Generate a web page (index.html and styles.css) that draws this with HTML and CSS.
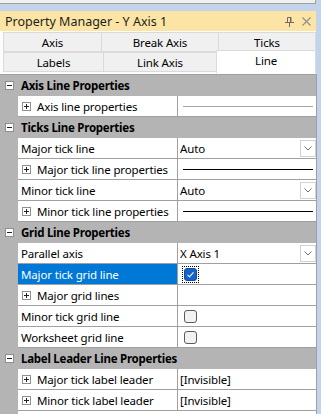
FILE: index.html
```html
<!DOCTYPE html>
<html>
<head>
<meta charset="utf-8">
<link rel="stylesheet" href="styles.css">
</head>
<body>
<div class="app">
  <div class="topstrip"></div>
  <div class="gap"></div>
  <div class="title">
    <span class="title-text">Property Manager - Y Axis 1</span>
    <span class="title-icons">
      <svg class="pin" width="9" height="10" viewBox="0 0 9 10"><path d="M2.5 0.5h3.5v5h-3.5z" fill="none" stroke="#6b6b6b"/><path d="M5.5 0.5v5" stroke="#6b6b6b"/><path d="M0 5.5h9M4.5 6v4" stroke="#6b6b6b"/></svg>
      <svg class="close" width="9" height="9" viewBox="0 0 9 9"><path d="M0.5 0.5l8 8M8.5 0.5l-8 8" stroke="#8c8c8c" stroke-width="1.1"/></svg>
    </span>
  </div>
  <div class="tabs">
    <div class="tabrow">
      <div class="tab t1">Axis</div>
      <div class="tab t2">Break Axis</div>
      <div class="tab t3">Ticks</div>
    </div>
    <div class="tabrow">
      <div class="tab t4">Labels</div>
      <div class="tab t5">Link Axis</div>
      <div class="tab t6 active">Line</div>
    </div>
  </div>
  <div class="grid">
    <div class="row hdr"><span class="gut"><svg class="box" width="9" height="9" viewBox="0 0 9 9"><rect x=".5" y=".5" width="8" height="8" fill="#fff" stroke="#8f8f8f"/><path d="M2 4.5h5" stroke="#222"/></svg></span><span class="hlabel">Axis Line Properties</span></div>
    <div class="row"><span class="gut"></span><span class="label sub"><svg class="box" width="9" height="9" viewBox="0 0 9 9"><rect x=".5" y=".5" width="8" height="8" fill="#fff" stroke="#8f8f8f"/><path d="M2 4.5h5M4.5 2v5" stroke="#222"/></svg>Axis line properties</span><span class="val"><i class="sample grey"></i></span></div>

    <div class="row hdr"><span class="gut"><svg class="box" width="9" height="9" viewBox="0 0 9 9"><rect x=".5" y=".5" width="8" height="8" fill="#fff" stroke="#8f8f8f"/><path d="M2 4.5h5" stroke="#222"/></svg></span><span class="hlabel">Ticks Line Properties</span></div>
    <div class="row"><span class="gut"></span><span class="label">Major tick line</span><span class="val">Auto<span class="drop"><svg width="8" height="5" viewBox="0 0 8 5"><path d="M0.5 0.5l3.5 3.5 3.5-3.5" fill="none" stroke="#707070"/></svg></span></span></div>
    <div class="row"><span class="gut"></span><span class="label sub"><svg class="box" width="9" height="9" viewBox="0 0 9 9"><rect x=".5" y=".5" width="8" height="8" fill="#fff" stroke="#8f8f8f"/><path d="M2 4.5h5M4.5 2v5" stroke="#222"/></svg>Major tick line properties</span><span class="val"><i class="sample black"></i></span></div>
    <div class="row"><span class="gut"></span><span class="label">Minor tick line</span><span class="val">Auto<span class="drop"><svg width="8" height="5" viewBox="0 0 8 5"><path d="M0.5 0.5l3.5 3.5 3.5-3.5" fill="none" stroke="#707070"/></svg></span></span></div>
    <div class="row"><span class="gut"></span><span class="label sub"><svg class="box" width="9" height="9" viewBox="0 0 9 9"><rect x=".5" y=".5" width="8" height="8" fill="#fff" stroke="#8f8f8f"/><path d="M2 4.5h5M4.5 2v5" stroke="#222"/></svg>Minor tick line properties</span><span class="val"><i class="sample black"></i></span></div>

    <div class="row hdr"><span class="gut"><svg class="box" width="9" height="9" viewBox="0 0 9 9"><rect x=".5" y=".5" width="8" height="8" fill="#fff" stroke="#8f8f8f"/><path d="M2 4.5h5" stroke="#222"/></svg></span><span class="hlabel">Grid Line Properties</span></div>
    <div class="row"><span class="gut"></span><span class="label">Parallel axis</span><span class="val">X Axis 1<span class="drop"><svg width="8" height="5" viewBox="0 0 8 5"><path d="M0.5 0.5l3.5 3.5 3.5-3.5" fill="none" stroke="#707070"/></svg></span></span></div>
    <div class="row"><span class="gut"></span><span class="label selected">Major tick grid line</span><span class="val"><span class="focus"><svg width="13" height="13" viewBox="0 0 13 13"><rect x=".5" y=".5" width="12" height="12" rx="2.5" fill="#1663c7" stroke="#0d4fa8"/><path d="M3.5 6.8l2 2 4-4.5" fill="none" stroke="#fff" stroke-width="1.1"/></svg></span></span></div>
    <div class="row"><span class="gut"></span><span class="label sub"><svg class="box" width="9" height="9" viewBox="0 0 9 9"><rect x=".5" y=".5" width="8" height="8" fill="#fff" stroke="#8f8f8f"/><path d="M2 4.5h5M4.5 2v5" stroke="#222"/></svg>Major grid lines</span><span class="val"></span></div>
    <div class="row"><span class="gut"></span><span class="label">Minor tick grid line</span><span class="val"><svg class="chk" width="13" height="13" viewBox="0 0 13 13"><rect x=".5" y=".5" width="12" height="12" rx="2.5" fill="#f2f2f2" stroke="#5a5a5a"/></svg></span></div>
    <div class="row"><span class="gut"></span><span class="label">Worksheet grid line</span><span class="val"><svg class="chk" width="13" height="13" viewBox="0 0 13 13"><rect x=".5" y=".5" width="12" height="12" rx="2.5" fill="#f2f2f2" stroke="#5a5a5a"/></svg></span></div>

    <div class="row hdr"><span class="gut"><svg class="box" width="9" height="9" viewBox="0 0 9 9"><rect x=".5" y=".5" width="8" height="8" fill="#fff" stroke="#8f8f8f"/><path d="M2 4.5h5" stroke="#222"/></svg></span><span class="hlabel">Label Leader Line Properties</span></div>
    <div class="row"><span class="gut"></span><span class="label sub"><svg class="box" width="9" height="9" viewBox="0 0 9 9"><rect x=".5" y=".5" width="8" height="8" fill="#fff" stroke="#8f8f8f"/><path d="M2 4.5h5M4.5 2v5" stroke="#222"/></svg>Major tick label leader</span><span class="val">[Invisible]</span></div>
    <div class="row"><span class="gut"></span><span class="label sub"><svg class="box" width="9" height="9" viewBox="0 0 9 9"><rect x=".5" y=".5" width="8" height="8" fill="#fff" stroke="#8f8f8f"/><path d="M2 4.5h5M4.5 2v5" stroke="#222"/></svg>Minor tick label leader</span><span class="val">[Invisible]</span></div>
    <div class="row tail"><span class="gut"></span><span class="fill"></span></div>
  </div>
</div>
</body>
</html>
```
FILE: styles.css
```css
* { box-sizing: border-box; margin: 0; padding: 0; }
html, body { width: 321px; height: 414px; overflow: hidden; }
body {
  background: #c3d4ea;
  font-family: "Noto Sans", "Open Sans", sans-serif;
  font-size: 11.5px;
  letter-spacing: -0.15px;
  color: #000;
}
.app { width: 317px; }
.topstrip {
  width: 316px;
  height: 4px;
  background: #f0f0f0;
  border-bottom: 1px solid #a0a0a0;
  border-right: 1px solid #a0a0a0;
}
.gap { height: 7px; }
.title {
  width: 316px;
  height: 20px;
  background: #fce5a4;
  display: flex;
  align-items: center;
  justify-content: space-between;
  padding: 0 5px 0 5px;
  color: #1e1e1e;
  font-size: 12.5px;
  letter-spacing: 0;
}
.title-icons { display: flex; align-items: center; gap: 8px; }
.title-icons .pin { margin-top: 1px; }
.tabs {
  width: 316px;
  height: 43px;
  background: #fcfcfc;
  padding: 1px 0 0 3px;
  display: flex;
  flex-direction: column;
}
.tabrow { display: flex; height: 20px; align-items: flex-end; }
.tab {
  height: 20px;
  background: #f0f0f0;
  border: 1px solid #dadada;
  display: flex;
  align-items: center;
  justify-content: center;
  margin-left: -1px;
  line-height: 1;
  padding-top: 1px;
}
.tab.t1 { width: 99px; margin-left: 0; }
.tab.t2 { width: 118px; }
.tab.t3 { width: 98px; }
.tab.t4 { width: 101px; margin-left: 0; }
.tab.t5 { width: 114px; }
.tab.t6 { width: 100px; }
.tab.active {
  background: #fff;
  height: 23px;
  margin-bottom: -1px;
  border-bottom: none;
  padding-bottom: 3px;
  position: relative;
}
.grid {
  width: 317px;
  border-top: 1px solid #a0a0a0;
  border-right: 1px solid #a0a0a0;
  background: #fff;
}
.row {
  display: grid;
  grid-template-columns: 18px 160px 138px;
  height: 21px;
}
.gut {
  background: #b4b4b4;
  display: flex;
  align-items: center;
  padding-left: 5px;
}
.label, .val {
  border-bottom: 1px solid #a0a0a0;
  display: flex;
  align-items: center;
  white-space: nowrap;
  overflow: hidden;
}
.label {
  border-right: 1px solid #a0a0a0;
  padding-left: 3px;
}
.label.sub { padding-left: 4px; }
.label.sub .box { margin-right: 6px; flex: none; }
.label.selected { background: #0078d7; color: #fff; }
.val { padding-left: 2px; }
.hdr { background: #b4b4b4; }
.hdr .hlabel {
  grid-column: 2 / 4;
  display: flex;
  align-items: center;
  padding-left: 3px;
  font-weight: bold;
  white-space: nowrap;
  letter-spacing: -0.25px;
}
.sample { display: block; height: 1px; width: 130px; margin-left: 3px; }
.sample.grey { background: #a6a6a6; }
.sample.black { background: #000; }
.drop {
  margin-left: auto;
  width: 16px;
  height: 17px;
  border: 1px solid #d2d2d2;
  background: #fff;
  display: flex;
  align-items: center;
  justify-content: center;
}
.chk { margin-left: 4px; }
.focus {
  margin-left: 3px;
  display: flex;
  padding: 1px;
  outline: 1px dotted #000;
  outline-offset: 0;
}
.tail { height: 3px; }
.tail .fill { grid-column: 2 / 4; }
```
